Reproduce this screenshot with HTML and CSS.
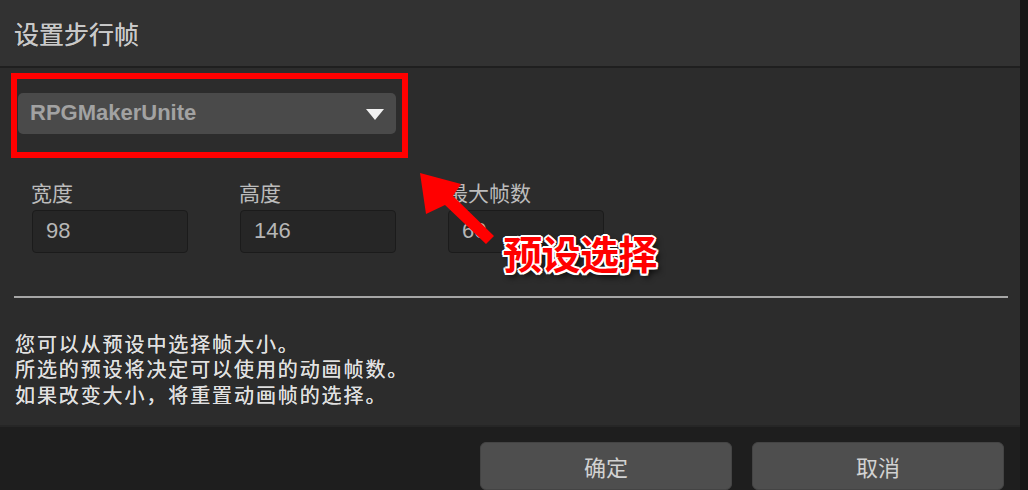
FILE: index.html
```html
<!DOCTYPE html>
<html lang="zh-CN">
<head>
<meta charset="utf-8">
<title>设置步行帧</title>
<link rel="stylesheet" href="styles.css">
</head>
<body>
<div class="window">
  <header class="header"><h1 class="title">设置步行帧</h1></header>
  <main class="content">
    <div class="highlight">
      <div class="select"><span class="select-text">RPGMakerUnite</span><span class="caret"></span></div>
    </div>
    <div class="fields">
      <div class="field"><div class="label">宽度</div><div class="input">98</div></div>
      <div class="field"><div class="label">高度</div><div class="input">146</div></div>
      <div class="field"><div class="label">最大帧数</div><div class="input">60</div></div>
    </div>
    <div class="sep"></div>
    <div class="desc">
      <div class="desc-line">您可以从预设中选择帧大小。</div>
      <div class="desc-line">所选的预设将决定可以使用的动画帧数。</div>
      <div class="desc-line">如果改变大小，将重置动画帧的选择。</div>
    </div>
  </main>
  <footer class="footer">
    <button class="btn">确定</button>
    <button class="btn">取消</button>
  </footer>
  <svg class="arrow" width="90" height="85" viewBox="410 165 90 85">
    <polygon points="420,173 461,184 453,196 494,236 486,244 445,205 426,214" fill="#ff0000"/>
  </svg>
  <div class="callout">预设选择</div>
</div>
<div class="edge"></div>
</body>
</html>
```
FILE: styles.css
```css
html, body {
  margin: 0;
  padding: 0;
}
body {
  width: 1028px;
  height: 490px;
  overflow: hidden;
  display: flex;
  background: #171717;
  font-family: "Liberation Sans", "Noto Sans CJK SC", sans-serif;
}
.window {
  position: relative;
  width: 1020px;
  height: 490px;
  display: flex;
  flex-direction: column;
  background: #2c2c2c;
}
.edge {
  flex: 1;
  background: #161616;
}
.header {
  height: 66px;
  background: #323232;
  border-bottom: 2px solid #1f1f1f;
  display: flex;
  align-items: center;
  padding-left: 14px;
}
.title {
  margin: 0;
  font-family: "Noto Sans CJK SC", sans-serif;
  font-weight: 400;
  font-size: 25px;
  color: #c9c9c9;
  text-shadow: 0 0 0.5px #c9c9c9;
}
.content {
  height: 358px;
  box-sizing: border-box;
  padding-top: 5px;
  background: #2c2c2c;
}
.highlight {
  margin-left: 11px;
  width: 397px;
  box-sizing: border-box;
  border: 6px solid #ff0000;
  padding: 14px 6px 18px 1px;
}
.select {
  height: 41px;
  background: #4a4a4a;
  border-radius: 5px;
  display: flex;
  align-items: center;
  justify-content: space-between;
  padding: 0 12px;
}
.select-text {
  font-family: "Liberation Sans", sans-serif;
  font-weight: 700;
  font-size: 22px;
  color: #a2a2a2;
}
.caret {
  width: 0;
  height: 0;
  border-left: 9.5px solid transparent;
  border-right: 9.5px solid transparent;
  border-top: 11px solid #f2f2f2;
  margin-top: 2px;
}
.fields {
  display: grid;
  grid-template-columns: repeat(3, 156px);
  column-gap: 52px;
  margin-top: 21px;
  padding-left: 32px;
}
.field {
  display: flex;
  flex-direction: column;
  gap: 5px;
}
.label {
  font-family: "Noto Sans CJK SC", sans-serif;
  font-size: 21px;
  line-height: 26px;
  color: #bcbcbc;
  margin-left: -1px;
}
.input {
  height: 43px;
  box-sizing: border-box;
  background: #262626;
  border: 1px solid #1b1b1b;
  border-radius: 4px;
  padding-left: 13px;
  display: flex;
  align-items: center;
  font-family: "Liberation Sans", sans-serif;
  font-size: 22px;
  color: #b6b6b6;
}
.sep {
  margin: 43px 0 0 14px;
  width: 994px;
  height: 2px;
  background: #a6a6a6;
}
.desc {
  margin-top: 33px;
  padding-left: 15px;
  display: flex;
  flex-direction: column;
}
.desc-line {
  height: 25.5px;
  font-family: "Noto Sans CJK SC", sans-serif;
  font-size: 20px;
  line-height: 25.5px;
  letter-spacing: 1.9px;
  color: #e0e0e0;
  text-shadow: 0 0 0.6px #e0e0e0;
}
.footer {
  flex: 1;
  background: #1e1e1e;
  border-top: 2px solid #262626;
  display: flex;
  justify-content: flex-end;
  align-items: flex-start;
  gap: 20px;
  padding: 15px 16px 0 0;
}
.btn {
  width: 252px;
  height: 48px;
  flex: none;
  background: #4e4e4e;
  border: 1px solid #444;
  border-radius: 6px;
  font-family: "Noto Sans CJK SC", sans-serif;
  font-size: 22px;
  color: #d2d2d2;
  padding: 0;
}
.arrow {
  position: absolute;
  left: 410px;
  top: 165px;
}
.callout {
  position: absolute;
  left: 503px;
  top: 230px;
  font-family: "Noto Sans CJK SC", sans-serif;
  font-weight: 700;
  font-size: 39px;
  line-height: 44px;
  color: #ff0000;
  letter-spacing: -0.5px;
  text-shadow:
    2px 0 0 #fff, -2px 0 0 #fff, 0 2px 0 #fff, 0 -2px 0 #fff,
    1.5px 1.5px 0 #fff, -1.5px 1.5px 0 #fff, 1.5px -1.5px 0 #fff, -1.5px -1.5px 0 #fff,
    3px 4px 6px rgba(0, 0, 0, 0.85);
}
```
